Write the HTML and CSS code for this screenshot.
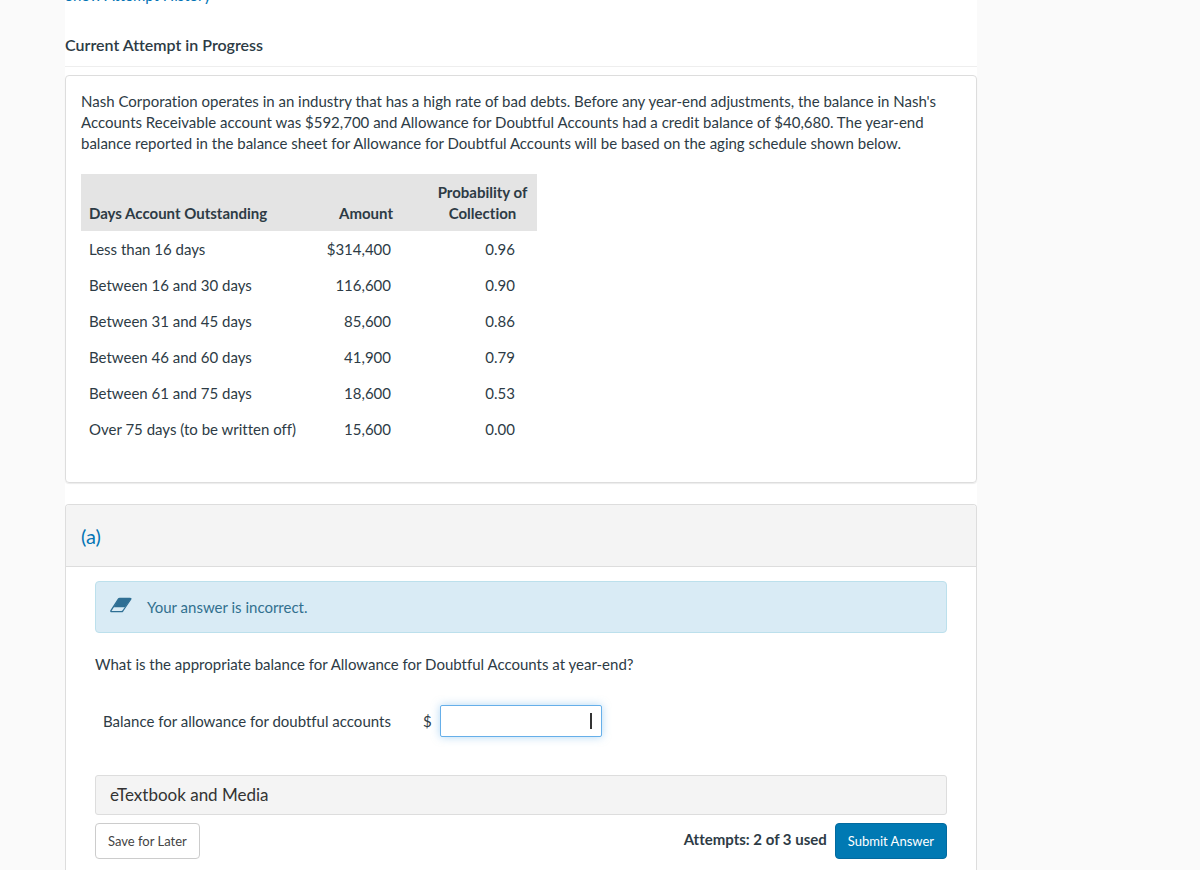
FILE: index.html
```html
<!DOCTYPE html>
<html lang="en">
<head>
<meta charset="utf-8">
<title>Current Attempt in Progress</title>
<link rel="stylesheet" href="styles.css">
</head>
<body>
<main class="page">
  <div class="history"><a class="history-link" href="#history">Show Attempt History</a></div>
  <h1 class="page-title">Current Attempt in Progress</h1>

  <section class="card problem">
    <p class="text">Nash Corporation operates in an industry that has a high rate of bad debts. Before any year-end adjustments, the balance in Nash's Accounts Receivable account was $592,700 and Allowance for Doubtful Accounts had a credit balance of $40,680. The year-end balance reported in the balance sheet for Allowance for Doubtful Accounts will be based on the aging schedule shown below.</p>
    <table class="aging">
      <thead>
        <tr><th class="days">Days Account Outstanding</th><th class="amount">Amount</th><th class="prob">Probability of<br>Collection</th></tr>
      </thead>
      <tbody>
        <tr><td>Less than 16 days</td><td class="num">$314,400</td><td class="rate">0.96</td></tr>
        <tr><td>Between 16 and 30 days</td><td class="num">116,600</td><td class="rate">0.90</td></tr>
        <tr><td>Between 31 and 45 days</td><td class="num">85,600</td><td class="rate">0.86</td></tr>
        <tr><td>Between 46 and 60 days</td><td class="num">41,900</td><td class="rate">0.79</td></tr>
        <tr><td>Between 61 and 75 days</td><td class="num">18,600</td><td class="rate">0.53</td></tr>
        <tr><td>Over 75 days (to be written off)</td><td class="num">15,600</td><td class="rate">0.00</td></tr>
      </tbody>
    </table>
  </section>

  <section class="card part">
    <h2 class="part-title">(a)</h2>
    <div class="part-body">
      <div class="alert" role="status">
        <svg class="eraser" viewBox="0 0 22 16" width="22" height="16" aria-hidden="true">
          <path d="M9.6 1.2H20q1.5 0 .6 1.3L15.4 9.6q-.5.6-1.2.6H3.6L8.6 1.8q.4-.6 1-.6Z" fill="#2f6f94"/>
          <path d="M9.6 1.3H20q1.4 0 .6 1.2L12.8 14q-.5.7-1.2.7H1.8q-1.5 0-.7-1.3L8.5 1.9q.4-.6 1.1-.6Z" fill="none" stroke="#2f6f94" stroke-width="1.3" stroke-linejoin="round"/>
        </svg>
        <span>Your answer is incorrect.</span>
      </div>
      <p class="text">What is the appropriate balance for Allowance for Doubtful Accounts at year-end?</p>
      <div class="answer">
        <label class="answer-label" for="balance">Balance for allowance for doubtful accounts</label>
        <span class="currency">$</span>
        <span class="field"><input class="answer-input" id="balance" type="text"><span class="caret"></span></span>
      </div>
      <button class="media" type="button">eTextbook and Media</button>
      <div class="actions">
        <button class="btn" type="button">Save for Later</button>
        <span class="attempts">Attempts: 2 of 3 used</span>
        <button class="btn primary" type="button">Submit Answer</button>
      </div>
    </div>
  </section>
</main>
</body>
</html>
```
FILE: styles.css
```css
* { box-sizing: border-box; }

body {
  margin: 0;
  background: #fafafa;
  color: #2d3b45;
  font: 15px/21px Lato, sans-serif;
  font-variant-ligatures: none;
}

.page {
  display: flex;
  flex-direction: column;
  min-height: 100vh;
  margin: 0 223px 0 65px;
  background: #fff;
}

.history {
  display: flex;
  align-items: flex-end;
  height: 6px;
  overflow: hidden;
}

.history-link {
  color: #0374b5;
  text-decoration: none;
}

.page-title {
  margin: 0 0 8px;
  padding: 28px 0 11px;
  border-bottom: 1px solid #eee;
  font-size: 16px;
  font-weight: 600;
  line-height: 21px;
}

.card {
  border: 1px solid #ddd;
  border-radius: 4px;
}

.problem {
  margin-bottom: 21px;
  padding: 15px 15px 35px;
  box-shadow: 0 1px 1px rgba(0, 0, 0, 0.08);
}

.text { margin: 0; }

.aging {
  width: 456px;
  margin-top: 20px;
  border-collapse: collapse;
}

.aging th {
  padding: 8px 7px 7px;
  background: #e4e4e4;
  font-weight: 700;
  vertical-align: bottom;
}

.aging td { padding: 8px 8px 7px; }
.aging .days { width: 230px; padding-left: 8px; text-align: left; }
.aging .amount { width: 110px; }
.aging .prob { padding-left: 14px; }
.aging .num { padding-right: 30px; text-align: right; }
.aging .rate { padding-right: 22px; text-align: right; }

.part {
  flex-grow: 1;
  border-bottom: 0;
  border-radius: 4px 4px 0 0;
}

.part-title {
  margin: 0;
  padding: 20px 15px 19px;
  background: #f4f4f4;
  border-bottom: 1px solid #ddd;
  border-radius: 3px 3px 0 0;
  color: #0374b5;
  font-size: 20px;
  font-weight: 400;
  line-height: 22px;
}

.part-body { padding: 14px 29px 10px; }

.alert {
  display: flex;
  gap: 15px;
  margin-bottom: 21px;
  padding: 15px 14px 14px;
  border: 1px solid #bce0ec;
  border-radius: 4px;
  background: #d9ebf5;
  color: #31708f;
}

.answer {
  display: flex;
  align-items: center;
  margin: 30px 0 38px;
  padding-left: 8px;
}

.answer-label { width: 320px; }
.currency { width: 17px; }

.field { position: relative; }

.answer-input {
  display: block;
  width: 162px;
  height: 32px;
  padding: 0 10px;
  border: 1px solid #66afe9;
  border-radius: 2px;
  background: #fff;
  box-shadow: 0 0 8px rgba(102, 175, 233, 0.5);
  font: inherit;
  text-align: right;
}

.caret {
  position: absolute;
  top: 8px;
  right: 10px;
  width: 2px;
  height: 16px;
  background: #333;
}

.media {
  display: block;
  width: 100%;
  padding: 8px 14px;
  border: 1px solid #ddd;
  border-radius: 3px;
  background: #f4f4f4;
  color: #333;
  font: 17px/22px Lato, sans-serif;
  text-align: left;
}

.actions {
  display: flex;
  align-items: center;
  margin-top: 8px;
}

.attempts {
  margin: 0 8px 4px auto;
  font-weight: 700;
}

.btn {
  padding: 7px 12px;
  border: 1px solid #ccc;
  border-radius: 4px;
  background: #fff;
  color: #444;
  font: 13px/20px Lato, sans-serif;
}

.primary {
  border-color: #026a9f;
  background: #0079b3;
  color: #fff;
}
```
